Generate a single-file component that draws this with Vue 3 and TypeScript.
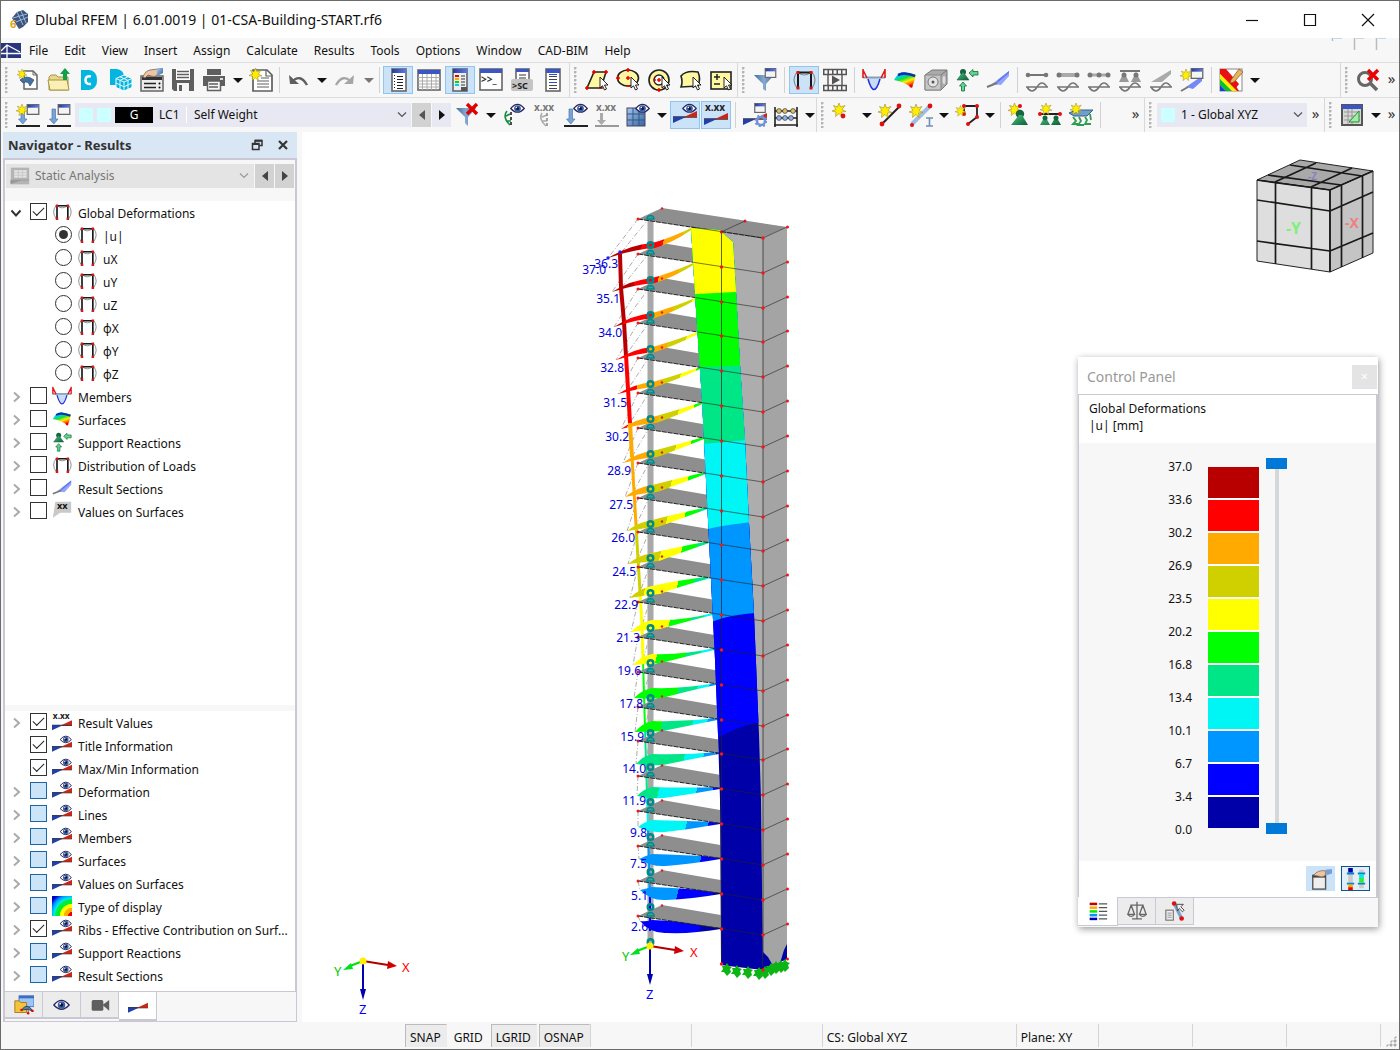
<script setup lang="ts">
import { h, ref } from 'vue'

interface Tool { i?: string; t?: string; on?: boolean; caret?: boolean; dim?: boolean; sep?: 'n' | 'w' }
interface Mark { x: number; y: number; s: number; t: string; c: string }

/* lettering that belongs to an icon */
const marks: Record<string, Mark> = {
  console: { x: 2, y: 15, s: 10, t: '>>_', c: '#333' },
  script: { x: 2, y: 21, s: 9, t: '>SC', c: '#222' },
  loadval: { x: 1, y: 8, s: 10, t: 'x.xx', c: '#777' },
  arrowval: { x: 1, y: 8, s: 10, t: 'x.xx', c: '#777' },
  resval: { x: 1, y: 8, s: 10, t: 'x.xx', c: '#222' },
  xx: { x: 6, y: 10, s: 11, t: 'xx', c: '#111' },
}
const Icon = (props: { name: string }) => {
  const m = marks[props.name]
  return h('svg', { viewBox: '0 0 24 24', 'aria-hidden': 'true' }, [
    h('use', { href: '#' + props.name, width: 24, height: 24 }),
    m ? h('text', { x: m.x, y: m.y, 'font-size': m.s, 'font-weight': 700, fill: m.c }, m.t) : null,
  ])
}
Icon.props = ['name']

const menus = ['File', 'Edit', 'View', 'Insert', 'Assign', 'Calculate', 'Results', 'Tools', 'Options', 'Window', 'CAD-BIM', 'Help']

const n: Tool = { sep: 'n' }
const w: Tool = { sep: 'w' }
const fileTools: Tool[] = [
  { i: 'new', t: 'New model' }, { i: 'open', t: 'Open' }, { i: 'dcenter', t: 'Dlubal Center' }, { i: 'cubes', t: 'Blocks' },
  { i: 'props', t: 'Model properties' }, { i: 'save', t: 'Save' }, { i: 'print', t: 'Print', caret: true }, { i: 'report', t: 'Printout report' }, n,
  { i: 'undo', t: 'Undo', caret: true }, { i: 'redo', t: 'Redo', caret: true, dim: true }, n,
  { i: 'navig', t: 'Navigator', on: true }, { i: 'table', t: 'Tables' }, { i: 'cpanel', t: 'Control panel', on: true },
  { i: 'console', t: 'Console' }, { i: 'script', t: 'Scripts' }, { i: 'list', t: 'Plausibility' },
]
const selectTools: Tool[] = [
  { i: 'selpoly', t: 'Select by rhomboid' }, { i: 'selell', t: 'Select by ellipse' }, { i: 'selring', t: 'Select by ring' },
  { i: 'selshape', t: 'Select by polygon' }, { i: 'selpm', t: 'Add or remove' },
]
const resultTools: Tool[] = [
  { i: 'filterwin', t: 'Filter' }, w, { i: 'deform', t: 'Deformation', on: true }, { i: 'film', t: 'Animation' }, w,
  { i: 'member', t: 'Members' }, { i: 'surface', t: 'Surfaces' }, { i: 'solid', t: 'Solids' }, { i: 'support', t: 'Supports' }, { i: 'section', t: 'Sections' }, w,
  { i: 'wave1', t: 'Line results' }, { i: 'wave2', t: 'Member results' }, { i: 'wave3', t: 'Member set results' }, { i: 'wave4', t: 'Support results' },
  { i: 'wave5', t: 'Section results' }, { i: 'newsection', t: 'New section' }, w, { i: 'palette', t: 'Colors', caret: true },
]
const viewTools: Tool[] = [
  { i: 'nofilter', t: 'Cancel filter', caret: true }, { i: 'loadeye', t: 'Show loads' }, { i: 'loadval', t: 'Load values' },
  { i: 'arroweye', t: 'Show load case' }, { i: 'arrowval', t: 'Load case values' }, { i: 'grideye', t: 'Show grid', caret: true },
  { i: 'reseye', t: 'Show results', on: true }, { i: 'resval', t: 'Result values', on: true }, w,
  { i: 'resgear', t: 'Result settings' }, { i: 'abacus', t: 'Calculate', caret: true },
]
const insertTools: Tool[] = [
  { i: 'addnode', t: 'New node', caret: true }, { i: 'addline', t: 'New line' }, { i: 'addmember', t: 'New member', caret: true },
  { i: 'addsurface', t: 'New surface', caret: true }, n, { i: 'sup1', t: 'Nodal support' }, { i: 'sup2', t: 'Line support' }, { i: 'sup3', t: 'Surface support' }, w,
]

const component = ref('|u|')
const components = ['|u|', 'uX', 'uY', 'uZ', 'φX', 'φY', 'φZ']
const resultTree = [
  { t: 'Members', i: 'member' }, { t: 'Surfaces', i: 'surface' }, { t: 'Support Reactions', i: 'support' },
  { t: 'Distribution of Loads', i: 'deform' }, { t: 'Result Sections', i: 'section' }, { t: 'Values on Surfaces', i: 'xx' },
]
const displayTree = [
  { t: 'Result Values', i: 'resval', on: true, open: true }, { t: 'Title Information', i: 'reseye', on: true, open: false },
  { t: 'Max/Min Information', i: 'reseye', on: true, open: false }, { t: 'Deformation', i: 'reseye', on: false, open: true },
  { t: 'Lines', i: 'reseye', on: false, open: true }, { t: 'Members', i: 'reseye', on: false, open: true },
  { t: 'Surfaces', i: 'reseye', on: false, open: true }, { t: 'Values on Surfaces', i: 'reseye', on: false, open: true },
  { t: 'Type of display', i: 'spectrum', on: false, open: true }, { t: 'Ribs - Effective Contribution on Surf...', i: 'reseye', on: true, open: true },
  { t: 'Support Reactions', i: 'reseye', on: false, open: true }, { t: 'Result Sections', i: 'reseye', on: false, open: true },
]

const palette = ['#b90000', '#ff0000', '#ffaa00', '#d0d000', '#ffff00', '#00ff00', '#00e687', '#00f5f5', '#0096ff', '#0000ff', '#0000a8']
const limits = [37.0, 33.6, 30.2, 26.9, 23.5, 20.2, 16.8, 13.4, 10.1, 6.7, 3.4, 0.0]
const band = (v: number): string => {
  for (let k = 1; k < limits.length; k++) if (v >= limits[k]) return palette[k - 1]
  return palette[10]
}
const lerp = (pts: number[][], y: number): number => {
  if (y <= pts[0][0]) return pts[0][1]
  for (let k = 1; k < pts.length; k++) {
    const [a, b] = [pts[k - 1], pts[k]]
    if (y <= b[0]) return a[1] + ((y - a[0]) / (b[0] - a[0])) * (b[1] - a[1])
  }
  return pts[pts.length - 1][1]
}
/* left edge of the deflected core face and the deflection along its height */
const coreEdge = [[228, 691], [294, 695], [400, 702], [600, 712], [660, 715], [735, 718], [800, 720], [965, 721]]
const coreValue = [[228, 22.6], [293, 20.2], [366, 16.8], [442, 13.4], [526, 10.1], [617, 6.7], [730, 3.4], [965, 0]]
const values = [36.3, 35.1, 34.0, 32.8, 31.5, 30.2, 28.9, 27.5, 26.0, 24.5, 22.9, 21.3, 19.6, 17.8, 15.9, 14.0, 11.9, 9.8, 7.5, 5.1, 2.6]
const tipX = [608, 612, 614, 616, 618, 621, 623, 625, 627, 628, 630, 631, 633, 634, 635, 636, 637, 638, 639, 640, 640]
const drop = [39, 38, 38, 37, 36, 36, 35, 34, 33, 32, 31, 30, 28, 26, 25, 23, 20, 16, 13, 9, 5]
const labelX = [618, 620, 622, 624, 627, 629, 631, 633, 635, 636, 638, 640, 641, 643, 644, 646, 646, 647, 647, 648, 648]
const labelY = [268, 303, 337, 372, 407, 441, 475, 509, 542, 576, 609, 642, 675, 708, 741, 773, 805, 837, 868, 900, 931]
const colX = [620, 621, 624, 626, 628, 630, 632, 634, 636, 638, 640, 642, 643, 644, 645, 646, 647, 648, 649, 650, 650]

const floors = values.map((u, i) => {
  const y = Math.round(219 + 34.83 * i)
  const xr = lerp(coreEdge, y + 12)
  const c = lerp(coreValue, y + 12)
  const tx = tipX[i]
  const ty = y + drop[i]
  const s = Math.max(0, i - 4) / 16
  const high = i < 11
  const top = Math.round(y + 24 - 20 * Math.pow(s, 1.5))
  const bx = Math.round(655 + s * 12)
  const by = Math.round(top + 5 + 8 * s)
  const mid = (tx + 650) / 2
  const yr = y + (high ? 10 : 12)
  const peak = u + 2.2 * s
  const stops: { o: number; c: string }[] = []
  let last = band(peak)
  stops.push({ o: 0, c: last })
  for (let k = 1; k <= 60; k++) {
    const t = k / 60
    const col = band(c + (peak - c) * (1 - Math.pow(t, 1.5 + s * 1.8)))
    if (col !== last) {
      stops.push({ o: t, c: last }, { o: t, c: col })
      last = col
    }
  }
  const upper = high ? `Q668 ${top - 4} ${xr} ${yr - 1}` : `Q684 ${top + 1} ${xr} ${yr - 1}`
  const lower = high ? `Q674 ${by - 6} ${bx} ${by}` : `Q692 ${yr + 6} ${bx} ${by}`
  const leaf = `M${tx} ${ty}Q${mid} ${top + 2} 652 ${top}${upper}V${yr + 1}${lower}Q${mid + 6} ${by + 1} ${tx} ${ty}Z`
  const slab = i === 0
    ? 'M638 219L662 208L787 227L763 238Z'
    : `M638 ${y}L662 ${y - 11}L${xr} ${y - 11 + (xr - 662) * 0.17}L${xr} ${y + (xr - 638) * 0.148}Z`
  return { i, u, y, xr, tx, ty, stops, leaf, slab }
})
const backToFront = [...floors].reverse()
const spine = floors.slice(0, -1).map((f, i) => ({
  d: `M${colX[i]} ${f.y + 35 - i}L${colX[i + 1]} ${f.y + 69 - i}`, c: band(f.u - 0.1), w: Math.max(2, 4 - Math.floor(i / 6)),
}))
const high = ref(37)
const low = ref(0)
const supports = [[727, 968], [737, 970], [748, 971], [759, 972], [765, 971], [771, 968], [776, 966], [781, 965], [785, 964]]
</script>

<template>
  <svg class="defs" aria-hidden="true">
    <defs>
      <linearGradient id="gBlue" x1="0" y1="0" x2="1" y2="1"><stop offset="0" stop-color="#a9c8ee" /><stop offset="1" stop-color="#34639f" /></linearGradient>
      <linearGradient id="gFunnel"><stop offset="0" stop-color="#3f6b9c" /><stop offset=".5" stop-color="#86abd4" /><stop offset="1" stop-color="#3f6b9c" /></linearGradient>
      <linearGradient id="gGreen" x1="0" y1="0" x2="1" y2="1"><stop offset="0" stop-color="#4fc987" /><stop offset="1" stop-color="#0c5c33" /></linearGradient>
      <linearGradient id="gTitle"><stop offset="0" stop-color="#2a3f9b" /><stop offset="1" stop-color="#5b78e8" /></linearGradient>
      <radialGradient id="gSpec" gradientUnits="userSpaceOnUse" cx="24" cy="24" r="30">
        <stop offset=".15" stop-color="#e00" /><stop offset=".17" stop-color="#ffb000" /><stop offset=".32" stop-color="#ffb000" /><stop offset=".34" stop-color="#ff0" /><stop offset=".47" stop-color="#ff0" /><stop offset=".5" stop-color="#0e3" /><stop offset=".65" stop-color="#0e3" /><stop offset=".7" stop-color="#0ee" /><stop offset=".85" stop-color="#09f" /><stop offset="1" stop-color="#00c" />
      </radialGradient>
      <linearGradient id="gRain" x1="0" y1="0" x2=".5" y2="1"><stop offset=".1" stop-color="#0020c0" /><stop offset=".3" stop-color="#00d0f0" /><stop offset=".5" stop-color="#10e040" /><stop offset=".7" stop-color="#ffee00" /><stop offset=".95" stop-color="#ff3000" /></linearGradient>
    </defs>
    <symbol id="star" viewBox="0 0 14 14"><path d="M7 0L8.500 4L13 2.500L10 6.500L14 8.500L9.500 9L10 13.500L7 10.500L3.500 13.500L4 9L0 8L4 6.500L1.500 2.500L5.500 4Z" fill="#ffee00" stroke="#a08a2c" stroke-width=".6" /></symbol>
    <symbol id="eye" viewBox="0 0 20 14"><path d="M1 7Q10 -4 19 7Q10 17 1 7Z" fill="#fff" stroke="#28285f" stroke-width="1.600" /><circle cx="10" cy="7" r="4.500" fill="#3c5fa8" /><circle cx="10" cy="7" r="2" fill="#101020" /><circle cx="8.500" cy="5.500" r="1" fill="#fff" /></symbol>
    <symbol id="win" viewBox="0 0 14 12"><rect x=".7" y=".7" width="12.600" height="10.600" fill="#f4f4f4" stroke="#666" stroke-width="1.400" /><rect x="1" y="1" width="12" height="3" fill="url(#gTitle)" /></symbol>
    <symbol id="ptr" viewBox="0 0 9 14"><path d="M1 0V11L3.500 8.800L5.500 13L7.500 12L5.500 8H9Z" fill="#fff" stroke="#111" stroke-width=".9" /></symbol>
    <symbol id="new" viewBox="0 0 24 24"><path d="M8 3h9l4 4v14H8Z" fill="#fff" stroke="#666" stroke-width="1.500" /><path d="M17 3v4h4" fill="none" stroke="#666" /><path d="M4 12Q10 6 18 12L14 18Q12 12 7 15Z" fill="#44719f" stroke="#2b4d75" stroke-width=".7" /><use href="#star" x="1" y="1" width="10" height="10" /></symbol>
    <symbol id="open" viewBox="0 0 24 24"><path d="M2 22V9l2-2h5l2 2h10v13Z" fill="#e6d78a" stroke="#a89443" /><path d="M1 12h19l2 10H3Z" fill="#faefb4" stroke="#a89443" /><path d="M18 0l5 6h-3v6h-4V6h-3Z" fill="#11a04a" /></symbol>
    <symbol id="dcenter" viewBox="0 0 24 24"><path d="M3 2h8a8 9 0 0 1 8 10a8 9 0 0 1-8 10H3Z" fill="#04b5e0" /><path d="M13 8.500Q7.500 7.500 7.500 12T13 16" fill="none" stroke="#fff" stroke-width="2.600" /></symbol>
    <symbol id="cubes" viewBox="0 0 24 24"><path d="M1 1h7q7 1 7 8t-6 8H1Z" fill="#04b5e0" /><path d="M15 7l8 3.500v9L15 23l-8-3.500v-9Z" fill="#04b5e0" stroke="#fff" /><path d="M7 10.500l8 3.500 8-3.500M15 14v9M11 8.800l8 3.600v9M19 8.800L11 12.300v9M7 15l8 3.800 8-3.800" fill="none" stroke="#fff" stroke-width=".9" /></symbol>
    <symbol id="props" viewBox="0 0 24 24"><rect x="1" y="8" width="22" height="15" fill="#ececec" stroke="#666" stroke-width="1.500" /><rect x="2" y="9" width="20" height="3" fill="#333" /><path d="M4 15.500h12M4 19.500h12" stroke="#222" stroke-width="1.500" /><circle cx="19.500" cy="15.500" r="1" /><circle cx="19.500" cy="19.500" r="1" /><path d="M3 9Q5 3 10 2L18 1V6Q15 10 11 8L8 7L5 10Z" fill="#edc5a4" stroke="#80634f" stroke-width=".8" /><path d="M17 0h6v5l-6 3Z" fill="url(#gBlue)" /></symbol>
    <symbol id="save" viewBox="0 0 24 24"><path d="M1 1h22v22H3l-2-2Z" fill="#5f5f5f" /><rect x="5" y="1" width="14" height="11" fill="#fff" /><path d="M6 3.500h12M6 6.500h12M6 9.500h12" stroke="#5f5f5f" stroke-width="1.500" /><rect x="6" y="15" width="12" height="8" fill="#f7f7f7" /><rect x="8" y="17" width="3" height="6" fill="#5f5f5f" /></symbol>
    <symbol id="print" viewBox="0 0 24 24"><rect x="5" y="1" width="14" height="6" fill="#5f5f5f" /><path d="M1 8h22v10H1Z" fill="#5f5f5f" /><rect x="5.500" y="13" width="13" height="9.500" fill="#f7f7f7" stroke="#5f5f5f" stroke-width="1.500" /><path d="M7 16h9M7 19h9" stroke="#5f5f5f" stroke-width="1.300" /><rect x="18" y="10" width="3" height="2" fill="#ddd" /></symbol>
    <symbol id="report" viewBox="0 0 24 24"><path d="M4 2h14l5 5v16H4Z" fill="#fff" stroke="#5f5f5f" stroke-width="1.700" /><path d="M17 2v6h6M8 13h12M8 16h12M8 19h12M12 10h8" fill="none" stroke="#5f5f5f" stroke-width="1.200" /><use href="#star" x="0" y="0" width="13" height="13" /></symbol>
    <symbol id="undo" viewBox="0 0 24 24"><path d="M3 7l1 9h9Z" fill="#5f5f5f" /><path d="M6 14Q14 5 21 17" fill="none" stroke="#5f5f5f" stroke-width="2.400" /></symbol>
    <symbol id="redo" viewBox="0 0 24 24"><path d="M21 7l-1 9h-9Z" fill="#a6a6a6" /><path d="M18 14Q10 5 3 17" fill="none" stroke="#a6a6a6" stroke-width="2.400" /></symbol>
    <symbol id="navig" viewBox="0 0 24 24"><rect x="6" y="1" width="14" height="22" fill="#fff" stroke="#666" stroke-width="1.600" /><rect x="6" y="1" width="14" height="4" fill="url(#gTitle)" /><path d="M11 8.500h6M11 11.500h6M11 14.500h6M11 17.500h6M11 20.500h6" stroke="#222" /><path d="M8.500 7v15" stroke="#222" stroke-dasharray="1 2" /></symbol>
    <symbol id="table" viewBox="0 0 24 24"><rect x="1" y="2" width="22" height="20" fill="#fff" stroke="#666" stroke-width="1.600" /><rect x="1" y="2" width="22" height="4" fill="#3b55c4" /><path d="M1 9.500h22M1 13h22M1 16h22M1 19h22M5.500 6v16M10 6v16M14.500 6v16M19 6v16" stroke="#aaa" /></symbol>
    <symbol id="cpanel" viewBox="0 0 24 24"><rect x="5" y="1" width="14" height="22" fill="#eee" stroke="#666" stroke-width="1.600" /><rect x="5" y="1" width="14" height="4" fill="url(#gTitle)" /><path d="M7 7h4v2H7Z" fill="#e00" /><path d="M7 10h4v2H7Z" fill="#fa0" /><path d="M7 13h4v2H7Z" fill="#0d0" /><path d="M7 16h4v2H7Z" fill="#0cf" /><path d="M13 8h4M13 11h4M13 14h4M13 17h4" stroke="#333" /><path d="M13 19h6v4h-6Z" fill="#555" /></symbol>
    <symbol id="console" viewBox="0 0 24 24"><rect x="1" y="1" width="22" height="21" fill="#fff" stroke="#666" stroke-width="1.600" /><rect x="1" y="1" width="22" height="4" fill="#3b55c4" /></symbol>
    <symbol id="script" viewBox="0 0 24 24"><rect x="6" y="1" width="13" height="14" fill="#fff" stroke="#666" stroke-width="1.600" /><rect x="6" y="1" width="13" height="3" fill="#3b55c4" /><path d="M9 7h7M9 10h7" stroke="#333" /><rect x="1" y="11" width="22" height="12" rx="2" fill="#c4c4c4" /></symbol>
    <symbol id="list" viewBox="0 0 24 24"><rect x="5" y="1" width="14" height="22" fill="#fff" stroke="#666" stroke-width="1.600" /><rect x="5" y="1" width="14" height="4" fill="#3b55c4" /><path d="M8 8.500h8M8 11.500h8M8 17.500h8M8 20.500h8" stroke="#444" /><path d="M8 6.500h8M8 14.500h8" stroke="#25c" /></symbol>
    <symbol id="selpoly" viewBox="0 0 24 24"><path d="M9 4h12l-5 16H2Z" fill="#fff8a0" stroke="#222" stroke-width="1.600" /><path d="M7 4h4M9 2v4M19 4h4M21 2v4M0 20h4M2 18v4M14 20h4" stroke="#e00" stroke-width="1.500" /><use href="#ptr" x="14" y="9" width="9" height="14" /></symbol>
    <symbol id="selell" viewBox="0 0 24 24"><ellipse cx="12" cy="10" rx="10.500" ry="8" fill="#fff8a0" stroke="#222" stroke-width="1.600" /><path d="M10 2h4M12 0v4M0 10h4M2 8v4M10 10h4M12 8v4M10 18h4" stroke="#e00" stroke-width="1.500" /><use href="#ptr" x="14" y="9" width="9" height="14" /></symbol>
    <symbol id="selring" viewBox="0 0 24 24"><circle cx="12" cy="12" r="10" fill="#fff8a0" stroke="#222" stroke-width="1.600" /><circle cx="12" cy="12" r="5" fill="#fff" stroke="#222" stroke-width="1.400" /><path d="M10 12h4M12 10v4M6 12h3M10 22h4M12 20v4" stroke="#e00" stroke-width="1.500" /><use href="#ptr" x="14" y="9" width="9" height="14" /></symbol>
    <symbol id="selshape" viewBox="0 0 24 24"><path d="M3 8Q8 2 20 4Q23 10 20 18L3 19Q5 14 3 8Z" fill="#fff8a0" stroke="#222" stroke-width="1.600" /><use href="#ptr" x="14" y="9" width="9" height="14" /></symbol>
    <symbol id="selpm" viewBox="0 0 24 24"><rect x="2" y="4" width="20" height="17" fill="#fff8a0" stroke="#222" stroke-width="1.600" /><path d="M5 9h6M8 6v6M5 16h6" stroke="#222" stroke-width="1.500" /><use href="#ptr" x="14" y="9" width="9" height="14" /></symbol>
    <symbol id="filterwin" viewBox="0 0 24 24"><path d="M1 7h20l-8 9v7l-3-2v-5Z" fill="url(#gFunnel)" /><use href="#win" x="11" y="0" width="13" height="10" /></symbol>
    <symbol id="nofilter" viewBox="0 0 24 24"><path d="M1 5h20l-8 9v9l-3-3v-6Z" fill="url(#gFunnel)" /><path d="M12 1L22 11M22 1L12 11" stroke="#e00000" stroke-width="3.400" /></symbol>
    <symbol id="deform" viewBox="0 0 24 24"><path d="M5 4Q-1 12 5 20M20 4Q26 12 20 20M7 5Q12 9 18 5" fill="none" stroke="#888" stroke-width="1.100" /><path d="M6 20V4.500h13V20" fill="none" stroke="#181818" stroke-width="2" /><path d="M4.500 3h3v3h-3ZM17.500 3h3v3h-3ZM4.500 18.500h3v3h-3ZM17.500 18.500h3v3h-3Z" fill="#d01818" /></symbol>
    <symbol id="film" viewBox="0 0 24 24"><path d="M0 1.500h24M0 22.500h24M0 6.500h24M0 17.500h24" stroke="#555" stroke-width="1.400" /><path d="M0 4h24M0 20h24" stroke="#555" stroke-width="4" stroke-dasharray="1.500 3" /><path d="M5 6v12M19 6v12" stroke="#555" stroke-width="1.400" /><path d="M9 7.500l8 4.500-8 4.500Z" fill="#555" /></symbol>
    <symbol id="member" viewBox="0 0 24 24"><path d="M1 9h22L18 11Q12 30 6 11Z" fill="#c7dcf7" /><path d="M6 11Q12 32 18 11" fill="none" stroke="#2030d8" stroke-width="1.500" /><path d="M1 9.500h22" stroke="#8a9fb5" stroke-width="2" /><path d="M1 1v9M1 2l4 8M23 1v9M23 2l-4 8" fill="none" stroke="#e01818" stroke-width="1.600" /></symbol>
    <symbol id="surface" viewBox="0 0 24 24"><path d="M1 12Q6 3 12 4L23 7L19 20Q12 14 1 12Z" fill="url(#gRain)" /><path d="M5 7Q12 4 22 8" stroke="#102fa8" stroke-width="2.500" fill="none" /><circle cx="18" cy="18" r="1.500" fill="#e00" /></symbol>
    <symbol id="solid" viewBox="0 0 24 24"><path d="M1 7l7-5h15v14l-6 6H1Z" fill="#aaa" stroke="#777" /><path d="M1 7h16v15H1Z" fill="#c5c5c5" stroke="#888" /><path d="M17 7l6-5" stroke="#777" /><circle cx="9" cy="14" r="5" fill="#e4e4e4" stroke="#777" /><circle cx="9" cy="14" r="1.500" fill="#555" /><ellipse cx="20" cy="12" rx="1.500" ry="4" fill="#ddd" /></symbol>
    <symbol id="support" viewBox="0 0 24 24"><circle cx="8" cy="4" r="3" fill="#14683c" /><path d="M8 4l6 8H2Z" fill="url(#gGreen)" stroke="#14683c" stroke-width=".6" /><path d="M14 5l4-3.500v2h5v3.500h-5v2ZM8 14l3.500 4H9.500v5H6.500v-5H4.500Z" fill="#5fd68d" stroke="#126b36" stroke-width=".8" /></symbol>
    <symbol id="section" viewBox="0 0 24 24"><path d="M6 16L23 3V8L15 17Z" fill="#93a4fa" /><path d="M12 12L23 3V5L10 16Z" fill="#5f78f0" /><path d="M1 19l10-4" stroke="#777" stroke-width="2" /></symbol>
    <symbol id="wave" viewBox="0 0 24 24"><path d="M1 19h22M2 19q5 8 10 0t10 0" fill="none" stroke="#757575" stroke-width="1.500" /></symbol>
    <symbol id="wave1" viewBox="0 0 24 24"><use href="#wave" /><path d="M4 7h16" stroke="#757575" stroke-width="2" /><circle cx="3" cy="7" r="2.300" fill="#777" /><circle cx="21" cy="7" r="2.300" fill="#777" /></symbol>
    <symbol id="wave2" viewBox="0 0 24 24"><use href="#wave" /><path d="M3 7h18" stroke="#aaa" stroke-width="4" /><circle cx="3" cy="7" r="2.500" fill="#777" /><circle cx="21" cy="7" r="2.500" fill="#777" /></symbol>
    <symbol id="wave3" viewBox="0 0 24 24"><use href="#wave" /><path d="M3 7h18" stroke="#aaa" stroke-width="3" /><circle cx="3" cy="7" r="2.500" fill="#777" /><circle cx="12" cy="7" r="2.500" fill="#777" /><circle cx="21" cy="7" r="2.500" fill="#777" /></symbol>
    <symbol id="wave4" viewBox="0 0 24 24"><use href="#wave" /><path d="M2 3h20" stroke="#757575" stroke-width="2" /><path d="M6 4l5 10H1ZM18 4l5 10H13Z" fill="#999" /><circle cx="6" cy="7" r="2.500" fill="#777" /><circle cx="18" cy="7" r="2.500" fill="#777" /></symbol>
    <symbol id="wave5" viewBox="0 0 24 24"><use href="#wave" /><path d="M2 14L22 2V6L13 14Z" fill="#aaa" /></symbol>
    <symbol id="newsection" viewBox="0 0 24 24"><path d="M6 19L22 8V13L13 21Z" fill="#7389f5" /><path d="M1 23l7-4" stroke="#777" stroke-width="2" /><use href="#win" x="10" y="0" width="14" height="11" /><use href="#star" x="0" y="1" width="12" height="12" /></symbol>
    <symbol id="palette" viewBox="0 0 24 24"><rect x="1" y="1" width="22" height="22" fill="#fff" stroke="#888" /><path d="M1 1h5l14 22h-3L1 6Z" fill="#e81010" /><path d="M2 1h5l13 15-3 4Z" fill="#e81010" /><path d="M1 6l17 17h-5L1 11Z" fill="#ffee00" /><path d="M1 11l12 12H7L1 17Z" fill="#10c020" /><path d="M1 17l6 6H1Z" fill="#1040e0" /><path d="M12 12L20 1l4 3-9 10-4 1Z" fill="#e9b360" stroke="#8a6228" stroke-width=".8" /></symbol>
    <symbol id="nofind" viewBox="0 0 24 24"><circle cx="9" cy="11" r="6.500" fill="none" stroke="#666" stroke-width="3" /><path d="M14 15l7 7" stroke="#666" stroke-width="3.500" /><path d="M12 2l10 10M22 2L12 12" stroke="#e00" stroke-width="3.300" /></symbol>
    <symbol id="arrdown" viewBox="0 0 24 24"><path d="M5 6h3.500v10H11l-4.200 5L2.500 16H5Z" fill="#78a3d8" stroke="#4a78b0" stroke-width=".7" /><path d="M0 23h24" stroke="#222" stroke-width="2" /></symbol>
    <symbol id="lcnew" viewBox="0 0 24 24"><use href="#arrdown" /><use href="#win" x="10" y="1" width="14" height="11" /><use href="#star" x="0" y="1" width="12" height="12" /></symbol>
    <symbol id="lcedit" viewBox="0 0 24 24"><use href="#arrdown" /><use href="#win" x="10" y="1" width="14" height="11" /></symbol>
    <symbol id="loadeye" viewBox="0 0 24 24"><path d="M5 8Q0 14 8 22M4 13l4-2M5 18h4" stroke="#148a3c" stroke-width="1.600" fill="none" /><path d="M9 9v13" stroke="#222" stroke-width="1.600" stroke-dasharray="3 2" /><use href="#eye" x="8" y="0" width="15" height="11" /></symbol>
    <symbol id="loadval" viewBox="0 0 24 24"><path d="M9 10Q5 16 13 23M9 14l5-2M9 18h5" stroke="#aaa" stroke-width="1.500" fill="none" /><path d="M14 10v13" stroke="#888" stroke-width="1.500" stroke-dasharray="3 2" /></symbol>
    <symbol id="arroweye" viewBox="0 0 24 24"><use href="#arrdown" /><use href="#eye" x="9" y="0" width="15" height="11" /></symbol>
    <symbol id="arrowval" viewBox="0 0 24 24"><path d="M5 10h3v7h3l-4.500 5L2 17h3Z" fill="#aaa" /><path d="M0 23h24" stroke="#999" stroke-width="2" /></symbol>
    <symbol id="grideye" viewBox="0 0 24 24"><rect x="1" y="5" width="18" height="18" fill="url(#gBlue)" stroke="#446" /><path d="M1 11h18M1 17h18M7 5v18M13 5v18" stroke="#315983" /><use href="#eye" x="9" y="0" width="15" height="11" /></symbol>
    <symbol id="res" viewBox="0 0 24 24"><path d="M0 14h24" stroke="#333" stroke-width="1.500" /><path d="M0 14h13L0 20Z" fill="#2440a8" /><path d="M11 14L24 8v6Z" fill="#c82818" /></symbol>
    <symbol id="reseye" viewBox="0 0 24 24"><use href="#res" /><use href="#eye" x="9" y="0" width="15" height="11" /></symbol>
    <symbol id="resval" viewBox="0 0 24 24"><use href="#res" y="2" /></symbol>
    <symbol id="resgear" viewBox="0 0 24 24"><use href="#res" y="2" /><use href="#win" x="10" y="0" width="14" height="10" /><circle cx="18" cy="18" r="4" fill="none" stroke="#6d93d8" stroke-width="2.500" /><circle cx="18" cy="18" r="5.500" fill="none" stroke="#6d93d8" stroke-width="2" stroke-dasharray="2 2.300" /></symbol>
    <symbol id="abacus" viewBox="0 0 24 24"><path d="M1 4v20M23 4v20M1 8h22M1 15h22M0 22h24" stroke="#222" stroke-width="1.600" /><g stroke="#333" stroke-width=".7"><circle cx="5" cy="8" r="2.400" fill="#e0c060" /><circle cx="11" cy="8" r="2.400" fill="#e0c060" /><circle cx="19" cy="8" r="2.400" fill="#e0c060" /><circle cx="5" cy="15" r="2.400" fill="#8fb2f0" /><circle cx="11" cy="15" r="2.400" fill="#8fb2f0" /><circle cx="17" cy="15" r="2.400" fill="#8fb2f0" /></g></symbol>
    <symbol id="addnode" viewBox="0 0 24 24"><use href="#star" x="0" y="0" width="14" height="14" /><circle cx="11" cy="13" r="2.400" fill="#e01010" /></symbol>
    <symbol id="addline" viewBox="0 0 24 24"><path d="M4 21L21 4" stroke="#222" stroke-width="2" /><circle cx="21" cy="3" r="2.400" fill="#e01010" /><circle cx="4" cy="21" r="2.400" fill="#e01010" /><use href="#star" x="0" y="1" width="14" height="14" /></symbol>
    <symbol id="addmember" viewBox="0 0 24 24"><path d="M3 21L20 4" stroke="#9fbde0" stroke-width="4" /><circle cx="21" cy="3" r="2.400" fill="#e01010" /><circle cx="3" cy="22" r="2" fill="#e01010" /><path d="M17 15h7M17 23h7M20.500 15v8" stroke="#6f8fb8" stroke-width="1.600" /><use href="#star" x="0" y="1" width="14" height="14" /></symbol>
    <symbol id="addsurface" viewBox="0 0 24 24"><path d="M9 11V3h13v11L13 21" fill="none" stroke="#222" stroke-width="1.800" /><circle cx="9" cy="3" r="2" fill="#e01010" /><circle cx="22" cy="3" r="2" fill="#e01010" /><circle cx="22" cy="14" r="2" fill="#e01010" /><circle cx="13" cy="21" r="2" fill="#e01010" /><circle cx="9" cy="11" r="2" fill="#e01010" /><use href="#star" x="0" y="2" width="11" height="12" /></symbol>
    <symbol id="sup1" viewBox="0 0 24 24"><use href="#star" x="1" y="0" width="13" height="13" /><circle cx="13" cy="11" r="4.200" fill="#14683c" /><path d="M12 12h3l6 10H4Z" fill="url(#gGreen)" /><circle cx="13" cy="3" r="2" fill="#e01010" /></symbol>
    <symbol id="sup2" viewBox="0 0 24 24"><path d="M2 11h20" stroke="#222" stroke-width="2" /><circle cx="2" cy="11" r="2" fill="#e01010" /><circle cx="22" cy="11" r="2" fill="#e01010" /><path d="M7 13l5 9H2ZM18 13l5 9H13Z" fill="url(#gGreen)" /><circle cx="7" cy="15" r="2.500" fill="#14683c" /><circle cx="18" cy="15" r="2.500" fill="#14683c" /><use href="#star" x="2" y="0" width="12" height="12" /></symbol>
    <symbol id="sup3" viewBox="0 0 24 24"><path d="M0 10l7-3h17l-6 6H5Z" fill="#6f9fc8" stroke="#386088" /><path d="M4 14l3 4-3 3h5M10 14l2 4-3 4h6M16 14l2 3-2 4h6M21 11l1 6" fill="none" stroke="#2f9d50" stroke-width="1.800" /><use href="#star" x="1" y="0" width="12" height="12" /></symbol>
    <symbol id="calc" viewBox="0 0 24 24"><rect x="2" y="2" width="20" height="20" fill="#d8d8d8" stroke="#555" stroke-width="2" /><rect x="2" y="2" width="20" height="4" fill="#3b55c4" /><path d="M4 9h16M4 13h16M4 17h16M8 6v15M12 6v15" stroke="#999" /><path d="M19 8v11H9Z" fill="#9df0a0" stroke="#2b8a3c" /></symbol>
    <symbol id="xx" viewBox="0 0 24 24"><path d="M4 1h19v13H10L1 20Z" fill="#c9c9c9" /></symbol>
    <symbol id="spectrum" viewBox="0 0 24 24"><rect width="24" height="24" fill="url(#gSpec)" /></symbol>
    <symbol id="folder" viewBox="0 0 24 24"><rect x="6" y="1" width="18" height="13" fill="#9dc4f5" stroke="#3d6fc0" /><rect x="6" y="1" width="18" height="3" fill="#3d6fc0" /><path d="M1 7h5l2 2h7v12H1Z" fill="#f2c33c" stroke="#9a7414" /><path d="M9 18Q16 8 23 20L17 17Z" fill="#4f86c8" stroke="#333" /><path d="M17 17v5" stroke="#333" /><circle cx="9" cy="18" r="1.500" fill="#e00" /><circle cx="17" cy="22" r="1.500" fill="#e00" /><circle cx="22" cy="19" r="1.500" fill="#e00" /></symbol>
    <symbol id="camera" viewBox="0 0 24 24"><rect x="2" y="6" width="14" height="13" rx="2" fill="#5f5f5f" /><path d="M15 12l8-6v13Z" fill="#5f5f5f" /></symbol>
    <symbol id="analysis" viewBox="0 0 24 24"><rect x="1" y="2" width="22" height="20" fill="#b4b4b4" /><rect x="5" y="5" width="15" height="9" fill="#e4e4e4" /><path d="M5 8h15M5 11h15M10 5v9M15 5v9" stroke="#c4c4c4" /><path d="M1 17h22M1 17v4l12-4" stroke="#999" fill="#999" /></symbol>
    <symbol id="legendtab" viewBox="0 0 24 24"><path d="M2 3.500h9" stroke="#c00000" stroke-width="3" /><path d="M2 8h9" stroke="#ffaa00" stroke-width="3" /><path d="M2 12.500h9" stroke="#00ee00" stroke-width="3" /><path d="M2 17h9" stroke="#0096ff" stroke-width="3" /><path d="M2 21.500h9" stroke="#0000a8" stroke-width="3" /><path d="M13 3.500h10M13 8h10M13 12.500h10M13 17h10M13 21.500h10" stroke="#555" stroke-width="1.500" /></symbol>
    <symbol id="scales" viewBox="0 0 24 24"><path d="M12 1v20M6 21.500h12M4 5h16M5 5L1 16h8L5 5M19 5l-4 11h8L19 5M1 16q4 5 8 0M15 16q4 5 8 0" fill="none" stroke="#666" stroke-width="1.600" /></symbol>
    <symbol id="filtertab" viewBox="0 0 24 24"><rect x="1" y="11" width="9" height="12" fill="#eee" stroke="#777" stroke-width="1.400" /><path d="M3 14.500h5M3 17h5M3 19.500h5" stroke="#888" /><path d="M11 3l9 18" stroke="#7ba2d0" stroke-width="4" /><circle cx="11" cy="3" r="2.800" fill="#e01010" /><circle cx="20" cy="21" r="2.800" fill="#e01010" /><path d="M14 4h8l-3 3 4 4-2 2-4-4-2 3Z" fill="#eee" stroke="#333" /></symbol>
    <symbol id="handbox" viewBox="0 0 24 24"><rect x="3" y="8" width="14" height="15" fill="#eee" stroke="#555" stroke-width="1.500" /><path d="M3 9h14" stroke="#444" stroke-width="3" /><path d="M4 8Q8 2 17 3v5q-4 3-7 1Z" fill="#edc5a4" stroke="#80634f" stroke-width=".8" /><path d="M17 2l7-1v5l-6 2Z" fill="#7a9fd8" /></symbol>
    <symbol id="pillars" viewBox="0 0 24 24"><path d="M6 2v20M18 2v20" stroke="#ccc" stroke-width="5" /><path d="M6 0v5" stroke="#00a" stroke-width="5" /><path d="M2 6h8M2 17h8M14 6h8M14 17h8" stroke="#08c" stroke-width="2" /><path d="M6 18v3" stroke="#fa0" stroke-width="5" /><path d="M6 21v3" stroke="#e00" stroke-width="5" /><path d="M18 7v5" stroke="#0ee" stroke-width="5" /><path d="M18 11v5" stroke="#3e3" stroke-width="5" /></symbol>
    <symbol id="triad" viewBox="0 0 90 70"><path d="M36 14V45" stroke="#0000b0" stroke-width="2" /><path d="M33 42h6l-3 11Z" fill="#0000b0" /><path d="M36 14l25 4" stroke="#b00000" stroke-width="2" /><path d="M61 14l9 5-10 3Z" fill="#d00000" /><path d="M36 14l-13 5" stroke="#00e000" stroke-width="2" /><path d="M24 16l2 6-10 1Z" fill="#00e020" /><circle cx="36" cy="14" r="3.500" fill="#ffee00" /></symbol>
  </svg>

  <div class="window">
    <header class="titlebar">
      <svg class="logo" viewBox="0 0 20 20"><path d="M3 8L8 2l6-2 5 4v8l-5 5-4 2Z" fill="#3b557c" /><path d="M8 2l6 13M12 1l5 12M4 8l14-4M7 12l12-5" stroke="#9db9dd" /><text x="1" y="18" font-size="11" font-weight="700" fill="#e0a520">6</text></svg>
      <h1>Dlubal RFEM | 6.01.0019 | 01-CSA-Building-START.rf6</h1>
      <div class="winbtns">
        <button aria-label="Minimize"><svg viewBox="0 0 14 14"><path d="M1 7.500h12" /></svg></button>
        <button aria-label="Maximize"><svg viewBox="0 0 14 14"><path d="M1.500 1.500h11v11h-11Z" /></svg></button>
        <button aria-label="Close"><svg viewBox="0 0 14 14"><path d="M1 1l12 12M13 1L1 13" /></svg></button>
      </div>
    </header>

    <nav class="menubar">
      <svg class="bridge" viewBox="0 0 20 15"><rect width="20" height="15" fill="#28347c" /><path d="M0 10.500h20M0 8L6 2L19 9M6 2v13" fill="none" stroke="#fff" stroke-width="1.300" /></svg>
      <button v-for="m in menus" :key="m">{{ m }}</button>
      <svg class="mdi" viewBox="0 0 60 12"><path d="M1.500 0v3M23.500 0v12M45.500 0v12" stroke="#bbb" stroke-width="1.500" /><path d="M3 .5h8M25 .5h8M47 .5h8" stroke="#bcd9f2" /></svg>
    </nav>

    <div class="toolbar">
      <div v-for="(g, gi) in [fileTools, selectTools, resultTools]" :key="gi" class="group">
        <i class="grip"></i>
        <template v-for="(b, k) in g" :key="k">
          <i v-if="b.sep" :class="['sep', b.sep]"></i>
          <template v-else>
            <button :class="['tool', { on: b.on }]" :aria-label="b.t"><Icon :name="b.i ?? ''" /></button>
            <button v-if="b.caret" :class="['caret', { dim: b.dim }]" :aria-label="b.t + ' options'"></button>
          </template>
        </template>
      </div>
      <div class="group last">
        <i class="grip"></i>
        <button class="tool" aria-label="Cancel search"><Icon name="nofind" /></button>
        <button class="more" aria-label="More">»</button>
      </div>
    </div>

    <div class="toolbar">
      <div class="group">
        <i class="grip"></i>
        <button class="tool" aria-label="New load case"><Icon name="lcnew" /></button>
        <button class="tool" aria-label="Edit load case"><Icon name="lcedit" /></button>
        <div class="loadcase">
          <i class="swatch"></i><i class="swatch"></i><b>G</b><span class="lc">LC1</span>
          <select aria-label="Load case"><option>Self Weight</option></select>
          <svg class="down" viewBox="0 0 10 6"><path d="M1 .5l4 4 4-4" /></svg>
        </div>
        <button class="step off" aria-label="Previous load case"><svg viewBox="0 0 6 10"><path d="M6 0v10L0 5Z" /></svg></button>
        <button class="step" aria-label="Next load case"><svg viewBox="0 0 6 10"><path d="M0 0v10l6-5Z" /></svg></button>
        <template v-for="(b, k) in viewTools" :key="k">
          <i v-if="b.sep" :class="['sep', b.sep]"></i>
          <template v-else>
            <button :class="['tool', { on: b.on }]" :aria-label="b.t"><Icon :name="b.i ?? ''" /></button>
            <button v-if="b.caret" class="caret" :aria-label="b.t + ' options'"></button>
          </template>
        </template>
      </div>
      <div class="group insert">
        <i class="grip"></i>
        <template v-for="(b, k) in insertTools" :key="k">
          <i v-if="b.sep" :class="['sep', b.sep]"></i>
          <template v-else>
            <button class="tool" :aria-label="b.t"><Icon :name="b.i ?? ''" /></button>
            <button v-if="b.caret" class="caret" :aria-label="b.t + ' options'"></button>
          </template>
        </template>
      </div>
      <button class="more push" aria-label="More">»</button>
      <div class="group">
        <i class="grip"></i>
        <div class="csys">
          <i class="swatch"></i>
          <select aria-label="Coordinate system"><option>1 - Global XYZ</option></select>
          <svg class="down" viewBox="0 0 10 6"><path d="M1 .5l4 4 4-4" /></svg>
        </div>
        <button class="more" aria-label="More">»</button>
      </div>
      <div class="group">
        <i class="grip"></i>
        <button class="tool" aria-label="Units"><Icon name="calc" /></button>
        <button class="caret" aria-label="Units options"></button>
        <button class="more" aria-label="More">»</button>
      </div>
    </div>

    <main>
      <aside class="navigator">
        <div class="navhead">
          <h2>Navigator - Results</h2>
          <button aria-label="Float"><svg viewBox="0 0 12 12"><path d="M4 4V1.500h7v5H8M1.500 4.500h6.500v6H1.500Z" fill="none" stroke="#333" stroke-width="1.500" /><path d="M4 1.800h7M1.500 5h6.500" stroke="#333" stroke-width="2" /></svg></button>
          <button aria-label="Close navigator"><svg viewBox="0 0 12 12"><path d="M2 2l8 8M10 2l-8 8" stroke="#333" stroke-width="2.200" /></svg></button>
        </div>
        <div class="navbody">
          <div class="analysis">
            <div class="combo">
              <Icon name="analysis" class="lead" />
              <select aria-label="Analysis type" disabled><option>Static Analysis</option></select>
              <svg class="down" viewBox="0 0 10 6"><path d="M1 .5l4 4 4-4" /></svg>
            </div>
            <button class="step" aria-label="Previous"><svg viewBox="0 0 6 10"><path d="M6 0v10L0 5Z" /></svg></button>
            <button class="step" aria-label="Next"><svg viewBox="0 0 6 10"><path d="M0 0v10l6-5Z" /></svg></button>
          </div>
          <ul class="tree grow">
            <li><svg class="exp open" viewBox="0 0 12 12"><path d="M1.500 3.500L6 8.500l4.500-5" /></svg><label><input type="checkbox" checked><Icon name="deform" /><span>Global Deformations</span></label></li>
            <li v-for="c in components" :key="c" class="sub"><label><input v-model="component" type="radio" name="component" :value="c"><Icon name="deform" /><span>{{ c }}</span></label></li>
            <li v-for="r in resultTree" :key="r.t"><svg class="exp" viewBox="0 0 12 12"><path d="M4 1.500L9 6l-5 4.500" /></svg><label><input type="checkbox"><Icon :name="r.i" /><span>{{ r.t }}</span></label></li>
          </ul>
          <ul class="tree lower">
            <li v-for="r in displayTree" :key="r.t"><svg :class="['exp', { none: !r.open }]" viewBox="0 0 12 12"><path d="M4 1.500L9 6l-5 4.500" /></svg><label><input type="checkbox" :checked="r.on" :class="{ partial: !r.on }"><Icon :name="r.i" /><span>{{ r.t }}</span></label></li>
          </ul>
        </div>
        <div class="navtabs">
          <button aria-label="Data"><Icon name="folder" /></button>
          <button aria-label="Display"><svg viewBox="0 0 20 14"><use href="#eye" /></svg></button>
          <button aria-label="Views"><Icon name="camera" /></button>
          <button class="cur" aria-label="Results"><Icon name="res" /></button>
        </div>
      </aside>

      <section class="canvas">
        <svg class="model" viewBox="570 200 240 810">
          <defs>
            <clipPath id="coreClip"><path d="M691 228L720 230L727 237L733 242L736 292L740 365L745 441L749 523L754 614L759 735L761 800L763 970L721 965L720 800L718 735L715 660L712 600L702 400L695 294Z" /></clipPath>
            <linearGradient v-for="f in floors" :id="'leaf' + f.i" :key="f.i" gradientUnits="userSpaceOnUse" :x1="f.tx" :y1="f.ty" :x2="f.xr" :y2="f.ty + 20"><stop v-for="(s, k) in f.stops" :key="k" :offset="s.o" :stop-color="s.c" /></linearGradient>
          </defs>
          <g fill="none" stroke="#888" stroke-width=".7" stroke-dasharray="5 2 1 2">
            <template v-for="f in floors" :key="f.i"><path :d="`M638 ${f.y}L${f.tx} ${f.ty}M650 ${f.y - 2}L${colX[f.i]} ${f.y + 35 - f.i}`" /></template>
          </g>
          <path d="M721 232L763 238V970L721 965Z" fill="#adadad" />
          <path d="M763 238L787 227V959L763 970Z" fill="#a4a4a4" />
          <path d="M647.500 219h6v726h-6Z" fill="#a8a8a8" />
          <path v-for="(s, k) in spine" :key="k" :d="s.d" :stroke="s.c" :stroke-width="s.w" />
          <g v-for="f in backToFront" :key="f.i">
            <path :d="f.leaf" :fill="`url(#leaf${f.i})`" />
            <path :d="f.slab" fill="#8e8e8e" />
            <path :d="`M638 ${f.y}L${f.i ? f.xr : 763} ${f.i ? f.y + (f.xr - 638) * 0.15 : 238}`" stroke="#222" stroke-width="1" stroke-dasharray="5 1" />
          </g>
          <g clip-path="url(#coreClip)">
            <path d="M680 220h90v760h-90Z" fill="#0000a8" />
            <path d="M680 220h90V720Q735 726 718 738H680Z" fill="#0000ff" />
            <path d="M680 220h90V612Q730 614 712 622H680Z" fill="#0096ff" />
            <path d="M680 220h90V521Q730 523 700 531H680Z" fill="#00f5f5" />
            <path d="M680 220h90V438L680 446Z" fill="#00e687" />
            <path d="M680 220h90V364L680 368Z" fill="#00ff00" />
            <path d="M680 220h90V290L680 295Z" fill="#ffff00" />
          </g>
          <path d="M763 952l5 5 4 7 8-1 4-13 3-6v15l-24 11Z" fill="#0000a8" />
          <path d="M721.500 232V965M763 238V970" stroke="#222" stroke-width=".7" />
          <g v-for="f in floors" :key="f.i">
            <path :d="`M${f.xr} ${f.y + (f.xr - 638) * 0.15}L763 ${f.y + 19}L787 ${f.y + 8}`" fill="none" stroke="#222" stroke-width=".6" />
            <circle cx="650.500" :cy="f.y + 26" r="2.800" fill="none" stroke="#008a8a" stroke-width="2.400" />
            <path :d="`M647 ${f.y}a3.500 3.500 0 0 1 7 0Z`" fill="#3aa0a0" stroke="#008a8a" stroke-width="1.600" />
            <g fill="#f01818"><circle cx="638" :cy="f.y" r="1.500" /><circle cx="662" :cy="f.y - 10.500" r="1.200" /><circle cx="721.500" :cy="f.y + 13" r="1.700" /><circle cx="763" :cy="f.y + 19" r="1.700" /><circle cx="787.500" :cy="f.y + 8" r="1.500" /></g>
          </g>
          <circle cx="745" cy="221" r="1.500" fill="#f01818" /><path d="M721 232l24-11" stroke="#333" stroke-width=".7" />
          <g fill="#0cb414"><path v-for="(s, k) in supports" :key="k" :d="`M${s[0]} ${s[1] - 5}l2 3 3 1-2 2 1 3-4 4-3-4-3 0 2-3-1-3 3 0Z`" /></g>
          <g fill="#f01818"><circle cx="721.500" cy="964" r="1.700" /><circle cx="763" cy="970" r="1.700" /><circle cx="787.500" cy="959" r="1.500" /></g>
          <circle cx="608" cy="258" r="1.700" fill="#2222ff" /><circle cx="620" cy="252" r="1.700" fill="#2222ff" />
          <g class="vals"><text x="606" y="274">37.0</text><text v-for="f in floors" :key="f.i" :x="labelX[f.i]" :y="labelY[f.i]">{{ f.u.toFixed(1) }}</text></g>
          <use href="#triad" x="614" y="932" width="90" height="70" />
          <text x="690" y="957" class="ax x">X</text><text x="622" y="961" class="ax y">Y</text><text x="646" y="999" class="ax z">Z</text>
        </svg>
        <svg class="origin" viewBox="0 0 90 70"><use href="#triad" /><text x="75" y="25" class="ax x">X</text><text x="7" y="29" class="ax y">Y</text><text x="32" y="67" class="ax z">Z</text></svg>

        <svg class="cube" viewBox="1254 156 124 120">
          <g stroke="#222" stroke-linejoin="round">
            <path d="M1257 180L1300 160L1373 171L1330 190Z" fill="#a9a9a9" />
            <path d="M1257 180L1330 190V272L1257 261Z" fill="#dedede" />
            <path d="M1330 190L1373 171V253L1330 272Z" fill="#c4c4c4" />
          </g>
          <path d="M1275.500 182.500V264M1311.500 187.500V269M1257 200L1330 211M1257 241L1330 251M1341.500 185V267M1362.500 176V258M1330 211L1373 192M1330 251L1373 233M1275 182L1316 163M1311 187L1352 168M1268 175L1341 185M1290 165L1362 176M1257 180L1330 190L1373 171M1330 190V272" fill="none" stroke="#1a1a1a" stroke-width="1.700" />
          <text x="1286" y="234" fill="#7ef07e">-Y</text><text x="1345" y="228" class="side" fill="#ee8080">-X</text><text x="1308" y="180" class="tiny" fill="#8484b8">-Z</text>
        </svg>

        <div class="panel">
          <div class="phead"><h2>Control Panel</h2><button aria-label="Close control panel">×</button></div>
          <div class="pbody">
            <p>Global Deformations<br>|u| [mm]</p>
            <div class="scale">
              <ol class="nums"><li v-for="l in limits" :key="l">{{ l.toFixed(1) }}</li></ol>
              <div class="bars"><i v-for="c in palette" :key="c" :style="{ background: c }"></i></div>
              <div class="range">
                <input v-model.number="high" type="range" min="0" max="37" aria-label="Upper limit">
                <input v-model.number="low" type="range" min="0" max="37" aria-label="Lower limit">
              </div>
            </div>
            <div class="pbtns">
              <button aria-label="Panel options"><Icon name="handbox" /></button>
              <button class="sel" aria-label="Limit values"><Icon name="pillars" /></button>
            </div>
          </div>
          <div class="ptabs">
            <button class="cur" aria-label="Color scale"><Icon name="legendtab" /></button>
            <button aria-label="Factors"><Icon name="scales" /></button>
            <button aria-label="Filter"><Icon name="filtertab" /></button>
          </div>
        </div>
      </section>
    </main>

    <footer class="status">
      <div class="snaps"><button class="in">SNAP</button><button>GRID</button><button class="in">LGRID</button><button class="in">OSNAP</button></div>
      <span class="c100"></span><span class="c130"></span><span class="c194">CS: Global XYZ</span><span class="c82">Plane: XY</span><span class="c94"></span><span class="c94"></span><span class="c94"></span><span class="end"></span>
    </footer>
  </div>
</template>

<style>
body { margin: 0; }
</style>

<style scoped>
.defs { position: absolute; width: 0; height: 0; }
.window { box-sizing: border-box; min-height: 100vh; display: flex; flex-direction: column; border: 1px solid #6b6b6b; background: #f7f7f7; color: #111; font: 12px/16px "Noto Sans", "Open Sans", sans-serif; overflow: hidden; }
.window * { box-sizing: border-box; }
.window svg { overflow: visible; }
button, select, input { font: inherit; color: inherit; margin: 0; padding: 0; border: 0; background: none; border-radius: 0; }
h1, h2, p, ul, ol { margin: 0; padding: 0; font-weight: 400; list-style: none; }
select { appearance: none; outline: 0; opacity: 1; }
i { display: block; flex: none; }
.titlebar { display: flex; align-items: center; height: 37px; padding-left: 8px; background: #fff; }
.logo { width: 20px; height: 20px; margin-right: 6px; }
h1 { font-size: 14px; line-height: 20px; }
.winbtns { display: flex; margin-left: auto; margin-right: 2px; }
.winbtns button { width: 58px; height: 37px; display: grid; place-items: center; }
.winbtns svg { width: 14px; height: 14px; fill: none; stroke: #111; stroke-width: 1.2; }
.menubar { display: flex; height: 24px; align-items: center; gap: 16px; }
.menubar button { line-height: 18px; padding-top: 2px; }
.bridge { width: 20px; height: 15px; margin-right: -8px; }
.mdi { width: 60px; height: 12px; margin-left: auto; margin-right: 8px; align-self: flex-start; }
.toolbar { display: flex; align-items: center; height: 35px; border-top: 1px solid #dedede; }
.group { display: flex; align-items: center; gap: 1px; height: 100%; margin-left: 1px; padding-left: 3px; border-left: 1px solid #d8d8d8; }
.toolbar > .group:first-child { border-left: 0; margin-left: 0; padding-left: 3px; }
.group.insert { margin-left: -1px; }
.toolbar > .last { margin-left: auto; }
.grip { width: 8px; height: 26px; background: radial-gradient(circle at 1px 1px, #b4b4b4 1px, transparent 2px) 1px 0 / 8px 4px; }
.tool { flex: none; width: 30px; height: 28px; display: grid; place-items: center; border: 1px solid transparent; }
.tool.on { background: #cbe3f8; border-color: #8fc5ee; }
.tool svg { width: 24px; height: 24px; }
.sep { height: 26px; border-left: 1px solid #d2d2d2; }
.sep.n { width: 3px; margin-left: 2px; }
.sep.w { width: 4px; margin-left: 3px; }
.caret { flex: none; width: 15px; height: 28px; display: grid; place-items: center; }
.insert .caret { width: 14px; }
.caret::before { content: ""; border: 5px solid transparent; border-bottom: 0; border-top-color: #111; }
.caret.dim::before { border-top-color: #777; }
.more { width: 15px; font-size: 15px; line-height: 20px; padding-bottom: 4px; color: #333; }
.push { margin-left: auto; }
.swatch { width: 14px; height: 14px; background: #ccffff; }
.loadcase { display: flex; align-items: center; width: 336px; height: 24px; background: #e8e8f2; padding: 0 4px; gap: 4px; }
.loadcase b { width: 38px; height: 16px; background: #000; color: #fff; text-align: center; font-weight: 400; }
.lc { width: 30px; padding-left: 2px; height: 16px; border-right: 1px solid #fff; }
.loadcase select { flex: 1; padding-left: 3px; }
.down { flex: none; width: 10px; height: 6px; fill: none; stroke: #555; stroke-width: 1.2; }
.step { flex: none; width: 19px; height: 24px; display: grid; place-items: center; background: #e8e8f2; }
.step svg { width: 6px; height: 10px; fill: #111; }
.step.off { background: #d2d2d2; }
.step.off svg { fill: #555; }
.csys { display: flex; align-items: center; gap: 6px; width: 150px; height: 24px; background: #e8e8f2; padding: 0 4px; }
.csys select { flex: 1; }
main { flex: 1; display: flex; }
.navigator { flex: none; width: 294px; margin-left: 2px; display: flex; flex-direction: column; }
.canvas { flex: 1; position: relative; margin-left: 5px; background: #fff; overflow: hidden; }
.navhead { display: flex; align-items: center; gap: 14px; height: 26px; padding: 0 8px 0 5px; background: #d9e6f3; }
.navhead h2 { flex: 1; font-size: 13px; font-weight: 700; color: #333; }
.navhead svg { display: block; width: 12px; height: 12px; }
.navbody { flex: 1; display: flex; flex-direction: column; border: 2px solid #cac8d4; border-bottom-width: 1px; }
.analysis { display: flex; gap: 1px; height: 41px; padding: 4px 1px 13px 1px; }
.combo { flex: 1; display: flex; align-items: center; gap: 5px; padding: 0 5px 0 4px; background: #e4e4e4; color: #777; }
.combo .lead { width: 20px; height: 20px; }
.combo select { flex: 1; }
.combo .down { stroke: #999; }
.analysis .step { background: #d2d2d2; }
.analysis .step svg { fill: #444; }
.tree { background: #fff; }
.grow { flex: 1; }
.lower { margin-top: 6px; padding-bottom: 4px; }
.tree li { display: flex; align-items: center; height: 23px; padding-left: 5px; }
.tree label { display: flex; align-items: center; white-space: nowrap; }
.tree label svg { width: 20px; height: 20px; margin: 0 6px 2px 5px; }
.tree span { padding-top: 2px; }
.exp { flex: none; width: 12px; height: 12px; margin-right: 8px; fill: none; stroke: #aaa; stroke-width: 2; }
.exp.open { stroke: #333; }
.exp.none { visibility: hidden; }
.tree .sub { padding-left: 50px; }
.tree input { appearance: none; flex: none; width: 17px; height: 17px; margin-bottom: 2px; border: 1px solid #333; background: #fff; display: grid; place-items: center; }
.tree input.partial { background: #cce4f7; border-color: #1c66a5; }
.tree input[type="checkbox"]:checked::before { content: ""; width: 10px; height: 5px; border: solid #222; border-width: 0 0 1px 1px; rotate: -45deg; margin-bottom: 4px; }
.tree input[type="radio"] { border-radius: 50%; }
.tree input[type="radio"]:checked::before { content: ""; width: 9px; height: 9px; border-radius: 50%; background: #333; }
.navtabs { display: flex; height: 30px; border: 1px solid #cac8d4; border-width: 0 1px 1px 2px; }
.navtabs button { width: 38px; height: 27px; background: #ececec; border: solid #cac8d4; border-width: 0 1px 2px 0; display: grid; place-items: center; }
.navtabs .cur { height: 29px; background: #fff; }
.navtabs svg { width: 20px; height: 20px; }
.navtabs button:nth-child(2) svg { width: 17px; }
.model { position: absolute; left: 268px; top: 68px; width: 240px; height: 810px; }
.vals text { fill: #0000dc; font-size: 12px; text-anchor: end; }
.ax { font-size: 13px; }
.ax.x { fill: #f00; }
.ax.y { fill: #00c800; }
.ax.z { fill: #00f; }
.origin { position: absolute; left: 25px; bottom: 5px; width: 90px; height: 70px; }
.cube { position: absolute; right: 21px; top: 24px; width: 124px; height: 120px; font-size: 16px; font-weight: 700; }
.side { font-size: 14px; }
.tiny { font-size: 10px; }
.panel { position: absolute; right: 21px; top: 225px; width: 300px; background: #f7f7f7; box-shadow: 1px 2px 7px #0006; }
.phead { display: flex; align-items: center; justify-content: space-between; height: 37px; padding: 3px 1px 0 9px; background: #fff; }
.phead h2 { font-size: 14px; color: #999; }
.phead button { width: 25px; height: 24px; background: #e4e4e4; color: #fff; }
.pbody { border: solid #cac8d4; border-width: 1px 2px 1px 1px; background: #fff; }
.pbody p { height: 48px; padding: 5px 10px; line-height: 17px; }
.scale { display: flex; height: 418px; padding: 15px 0 0 89px; background: #f7f7f7; }
.nums { width: 24px; text-align: right; font-size: 12px; line-height: 17px; }
.nums li { height: 33px; }
.bars { display: flex; flex-direction: column; gap: 2px; width: 51px; height: 361px; margin: 9px 7px 0 16px; background: #fff; }
.bars i { flex: 1; }
.range { display: grid; width: 21px; height: 376px; background: linear-gradient(#d4d8d8, #d4d8d8) center / 4px 100% no-repeat; }
.range input { grid-area: 1 / 1; appearance: none; writing-mode: vertical-lr; direction: rtl; width: 21px; height: 376px; pointer-events: none; }
.range input::-webkit-slider-thumb { appearance: none; width: 21px; height: 11px; background: #0078d7; pointer-events: auto; }
.pbtns { display: flex; justify-content: flex-end; gap: 6px; height: 36px; padding: 5px 6px; }
.pbtns button { width: 29px; height: 25px; display: grid; place-items: center; background: #cbe3f8; }
.pbtns .sel { border: 1px solid #0a5596; background: #e4eef8; }
.pbtns svg { width: 22px; height: 22px; }
.ptabs { display: flex; height: 29px; }
.ptabs button { width: 38px; height: 27px; display: grid; place-items: center; background: #ececec; border: solid #cac8d4; border-width: 0 1px 1px 0; }
.ptabs .cur { width: 40px; height: 29px; background: #fff; margin-top: -1px; }
.ptabs svg { width: 20px; height: 20px; }
.status { display: flex; height: 27px; padding: 2px 0; }
.snaps { display: flex; gap: 2px; margin-left: 404px; border-right: 1px solid #d4d4d4; }
.snaps button { padding: 0 5px 0 4px; border: 1px solid transparent; border-width: 1px 1px 0 1px; line-height: 26px; }
.snaps .in { background: #ececec; border-color: #bbb transparent transparent #bbb; }
.status span { line-height: 27px; padding-left: 4px; border-right: 1px solid #d4d4d4; white-space: nowrap; }
.c100 { flex: 0 1 101px; }
.c130 { flex: 0 1 131px; }
.c194 { flex: 0 1 194px; }
.c82 { flex: 0 1 82px; }
.c94 { flex: 0 1 94px; }
.status .end { width: 12px; height: 12px; margin: auto 2px 0 auto; border: 0; background: radial-gradient(circle at 2px 2px, #aaa 1px, transparent 2px) 0 0 / 4px 4px; clip-path: polygon(100% 0, 100% 100%, 0 100%); }
</style>
